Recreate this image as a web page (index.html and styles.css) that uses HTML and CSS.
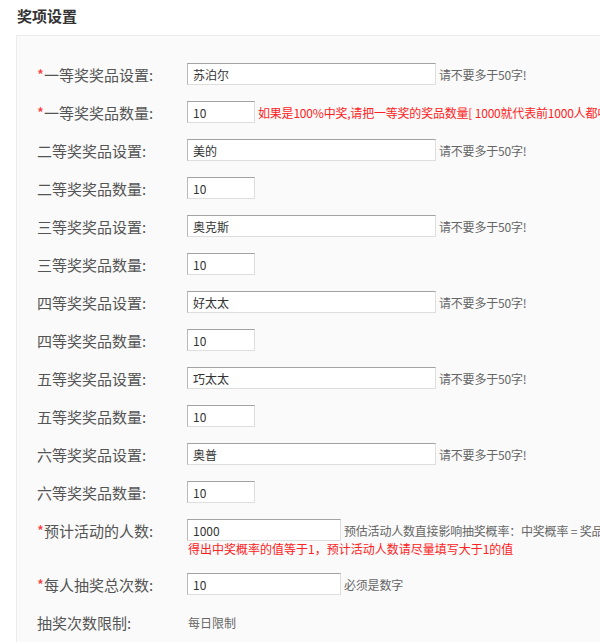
FILE: index.html
```html
<!DOCTYPE html>
<html lang="zh-CN">
<head>
<meta charset="utf-8">
<title>奖项设置</title>
<link rel="stylesheet" href="styles.css">
</head>
<body>
<h2 class="title">奖项设置</h2>
<div class="panel">
  <div class="row"><label class="lbl"><span class="req">*</span>一等奖奖品设置:</label><input class="ipt wide" value="苏泊尔"><span class="tip">请不要多于50字!</span></div>
  <div class="row"><label class="lbl"><span class="req">*</span>一等奖奖品数量:</label><input class="ipt small" value="10"><span class="tip red">如果是100%中奖,请把一等奖的奖品数量[ 1000就代表前1000人都中奖 ]</span></div>
  <div class="row"><label class="lbl">二等奖奖品设置:</label><input class="ipt wide" value="美的"><span class="tip">请不要多于50字!</span></div>
  <div class="row"><label class="lbl">二等奖奖品数量:</label><input class="ipt small" value="10"></div>
  <div class="row"><label class="lbl">三等奖奖品设置:</label><input class="ipt wide" value="奥克斯"><span class="tip">请不要多于50字!</span></div>
  <div class="row"><label class="lbl">三等奖奖品数量:</label><input class="ipt small" value="10"></div>
  <div class="row"><label class="lbl">四等奖奖品设置:</label><input class="ipt wide" value="好太太"><span class="tip">请不要多于50字!</span></div>
  <div class="row"><label class="lbl">四等奖奖品数量:</label><input class="ipt small" value="10"></div>
  <div class="row"><label class="lbl">五等奖奖品设置:</label><input class="ipt wide" value="巧太太"><span class="tip">请不要多于50字!</span></div>
  <div class="row"><label class="lbl">五等奖奖品数量:</label><input class="ipt small" value="10"></div>
  <div class="row"><label class="lbl">六等奖奖品设置:</label><input class="ipt wide" value="奥普"><span class="tip">请不要多于50字!</span></div>
  <div class="row"><label class="lbl">六等奖奖品数量:</label><input class="ipt small" value="10"></div>
  <div class="row"><label class="lbl"><span class="req">*</span>预计活动的人数:</label><input class="ipt mid" value="1000"><span class="tip">预估活动人数直接影响抽奖概率：中奖概率 = 奖品总数/(预估活动参与人数*每人抽奖次数) 如果要确保任何时候都中奖，请确保</span></div>
  <div class="note red">得出中奖概率的值等于1，预计活动人数请尽量填写大于1的值</div>
  <div class="row"><label class="lbl"><span class="req">*</span>每人抽奖总次数:</label><input class="ipt mid" value="10"><span class="tip">必须是数字</span></div>
  <div class="row"><label class="lbl">抽奖次数限制:</label><span class="plain">每日限制</span></div>
</div>
</body>
</html>
```
FILE: styles.css
```css
html, body {
  margin: 0;
  padding: 0;
  background: #fff;
  overflow: hidden;
}
body {
  font-family: "Noto Sans CJK SC", "Microsoft YaHei", sans-serif;
  color: #555;
  width: 600px;
  height: 642px;
}
.title {
  margin: 0;
  padding: 6px 0 0 17px;
  height: 29px;
  font-size: 15px;
  line-height: 20px;
  font-weight: bold;
  color: #333;
}
.panel {
  margin-left: 16px;
  width: 620px;
  background: #fafafa;
  border: 1px solid #ececec;
  padding: 27px 0 40px 20px;
  overflow: hidden;
}
.row {
  display: flex;
  align-items: center;
  height: 22px;
  margin-bottom: 16px;
  white-space: nowrap;
}
.lbl {
  width: 150px;
  flex: none;
  font-size: 15px;
  color: #555;
}
.req {
  color: #f33;
}
.ipt {
  box-sizing: border-box;
  height: 22px;
  margin: 0;
  padding: 0 5px;
  font-family: "Noto Sans CJK SC", "Microsoft YaHei", sans-serif;
  font-size: 12px;
  color: #333;
  background: #fff;
  border: 1px solid;
  border-color: #a2a2a2 #dedede #dedede #b8b8b8;
  flex: none;
  outline: none;
}
.wide { width: 249px; }
.small { width: 68px; }
.mid { width: 154px; }
.tip {
  margin-left: 3px;
  font-size: 12px;
  letter-spacing: -0.2px;
  color: #666;
}
.tip.red {
  color: #f22;
}
.note {
  margin: -16px 0 16px 151px;
  height: 16px;
  line-height: 16px;
  font-size: 12px;
  white-space: nowrap;
}
.note.red { color: #f22; }
.plain {
  margin-left: 1px;
  font-size: 12px;
  color: #666;
}
```
